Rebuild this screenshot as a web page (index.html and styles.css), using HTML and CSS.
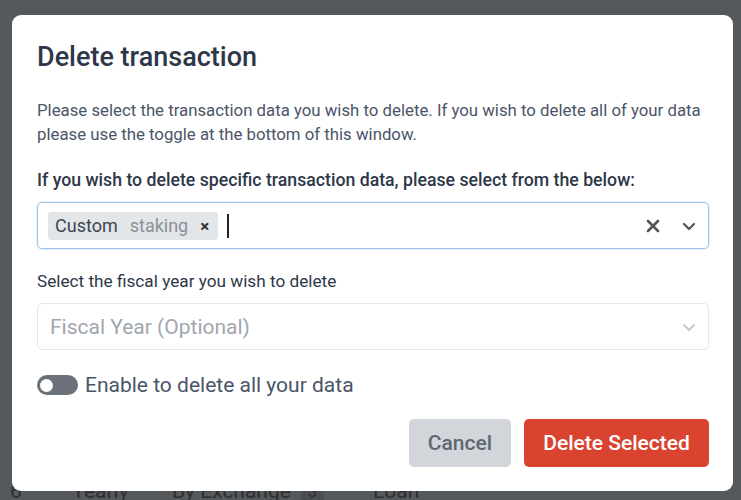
FILE: index.html
```html
<!DOCTYPE html>
<html lang="en">
<head>
<meta charset="utf-8">
<title>Delete transaction</title>
<link rel="stylesheet" href="styles.css">
</head>
<body>
<div class="page">
  <div class="bg-row">
    <span class="c-num">6</span>
    <span class="c-freq">Yearly</span>
    <span class="c-type">By Exchange <span class="bg-badge">3</span></span>
    <span class="c-kind">Loan</span>
  </div>
</div>
<div class="overlay">
  <div class="modal">
    <h2 class="modal-title">Delete transaction</h2>
    <p class="modal-text">Please select the transaction data you wish to delete. If you wish to delete all of your data please use the toggle at the bottom of this window.</p>
    <label class="field-label">If you wish to delete specific transaction data, please select from the below:</label>
    <div class="select focused">
      <div class="select-values">
        <span class="chip"><span class="chip-main">Custom</span><span class="chip-sub">staking</span><span class="chip-x">×</span></span>
        <span class="caret"></span>
      </div>
      <div class="select-icons">
        <svg class="ico-clear" width="16" height="16" viewBox="0 0 16 16"><path d="M3 3L13 13M13 3L3 13" stroke="#555" stroke-width="2.6" stroke-linecap="round"/></svg>
        <svg class="ico-chev" width="16" height="16" viewBox="0 0 16 16"><path d="M3 6L8 11L13 6" fill="none" stroke="#555" stroke-width="2.2" stroke-linecap="round" stroke-linejoin="round"/></svg>
      </div>
    </div>
    <label class="field-label second">Select the fiscal year you wish to delete</label>
    <div class="select">
      <div class="select-values"><span class="placeholder">Fiscal Year (Optional)</span></div>
      <div class="select-icons">
        <svg class="ico-chev" width="16" height="16" viewBox="0 0 16 16"><path d="M3 6L8 11L13 6" fill="none" stroke="#c8c8c8" stroke-width="1.9" stroke-linecap="round" stroke-linejoin="round"/></svg>
      </div>
    </div>
    <div class="toggle-row">
      <span class="toggle"><span class="knob"></span></span>
      <span class="toggle-text">Enable to delete all your data</span>
    </div>
    <div class="actions">
      <button class="btn btn-cancel">Cancel</button>
      <button class="btn btn-danger">Delete Selected</button>
    </div>
  </div>
</div>
</body>
</html>
```
FILE: styles.css
```css
html, body {
  margin: 0;
  padding: 0;
}
body {
  background: #56595c;
  font-family: Roboto, "Liberation Sans", sans-serif;
  width: 741px;
  height: 500px;
  overflow: hidden;
}
.page {
  padding-top: 477px;
}
.bg-row {
  display: flex;
  align-items: center;
  font-size: 21px;
  color: #2c2f32;
  height: 28px;
}
.c-num { width: 62px; padding-left: 10px; }
.c-freq { width: 100px; }
.c-type { width: 201px; display: flex; align-items: center; gap: 10px; }
.bg-badge {
  background: #4b4e51;
  color: #2c2f32;
  font-size: 16px;
  padding: 0 7px;
  border-radius: 3px;
}
.overlay {
  position: fixed;
  inset: 0;
}
.modal {
  position: absolute;
  left: 12px;
  top: 15px;
  width: 721px;
  height: 476px;
  box-sizing: border-box;
  background: #fff;
  border-radius: 9px;
  padding: 26px 24px 24px 25px;
  display: flex;
  flex-direction: column;
}
.modal-title {
  margin: 0;
  font-size: 27px;
  font-weight: 500;
  line-height: 32px;
  color: #2d3748;
}
.modal-text {
  margin: 25px 0 0;
  font-size: 16.8px;
  line-height: 24px;
  color: #4a5568;
}
.field-label {
  display: block;
  margin-top: 22px;
  font-size: 17.7px;
  font-weight: 500;
  line-height: 24px;
  color: #2d3748;
}
.field-label.second {
  margin-top: 20px;
  font-size: 17.2px;
  font-weight: 400;
  color: #2d3748;
}
.select {
  margin-top: 10px;
  height: 47px;
  flex-shrink: 0;
  box-sizing: border-box;
  border: 1px solid #e2e8f0;
  border-radius: 5px;
  display: flex;
  align-items: center;
  padding: 0 11px 0 10px;
}
.select.focused {
  border-color: #9fc2e8;
  box-shadow: 0 0 0 1px rgba(159, 194, 232, 0.25);
}
.select-values {
  flex: 1;
  display: flex;
  align-items: center;
}
.chip {
  display: flex;
  align-items: center;
  height: 28px;
  background: #e3e6e9;
  border-radius: 3px;
  padding: 0 9px 0 7px;
  font-size: 18px;
}
.chip-main { color: #3d4650; }
.chip-sub { color: #8a9099; margin-left: 12px; }
.chip-x { color: #333; font-weight: 700; margin-left: 12px; font-size: 17px; }
.caret {
  width: 2px;
  height: 24px;
  background: #222;
  margin-left: 9px;
}
.placeholder {
  font-size: 21px;
  color: #a0a6ad;
  padding-left: 2px;
}
.select-icons {
  display: flex;
  align-items: center;
  gap: 20px;
}
.ico-clear, .ico-chev { display: block; }
.toggle-row {
  margin-top: 23px;
  display: flex;
  align-items: center;
  gap: 7px;
  height: 24px;
}
.toggle {
  width: 41px;
  height: 20px;
  border-radius: 10px;
  background: #6b7178;
  display: flex;
  align-items: center;
  padding-left: 3px;
  box-sizing: border-box;
}
.knob {
  width: 13px;
  height: 13px;
  border-radius: 50%;
  background: #fff;
}
.toggle-text {
  font-size: 21px;
  color: #4a5568;
  line-height: 24px;
}
.actions {
  margin-top: auto;
  display: flex;
  justify-content: flex-end;
  gap: 13px;
}
.btn {
  height: 48px;
  border: none;
  border-radius: 5px;
  font-family: Roboto, "Liberation Sans", sans-serif;
  font-size: 21px;
  font-weight: 500;
  padding: 0;
}
.btn-cancel {
  background: #d2d6da;
  color: #5f6773;
  width: 102px;
}
.btn-danger {
  background: #d9432f;
  color: #fff;
  width: 185px;
}
```
